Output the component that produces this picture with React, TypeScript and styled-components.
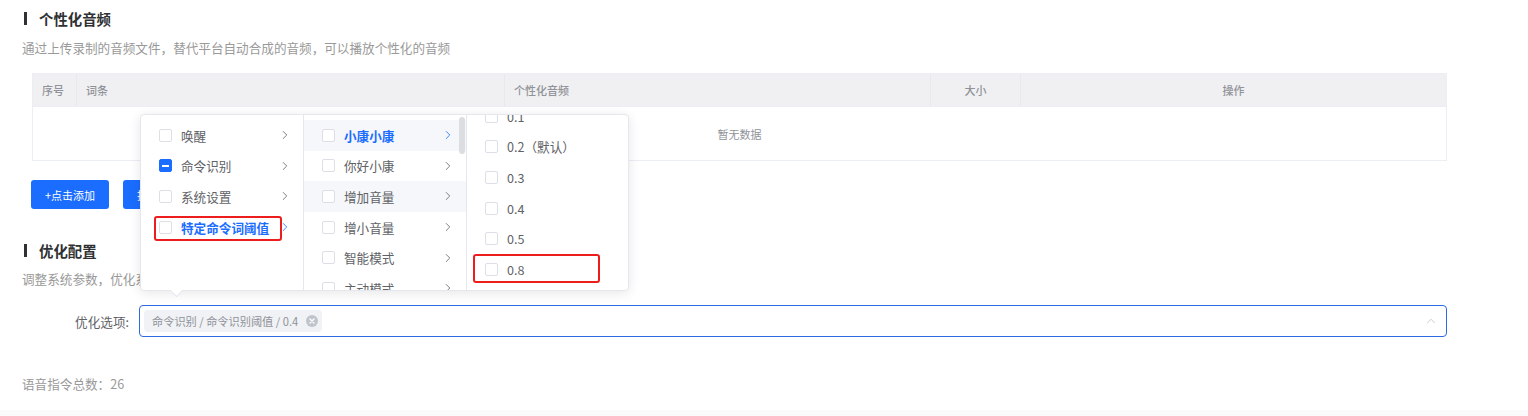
import React, { useLayoutEffect, useRef } from "react";
import styled, { createGlobalStyle } from "styled-components";
import { ChevronRight, ChevronUp } from "lucide-react";

const GlobalStyle = createGlobalStyle`
	* { box-sizing: border-box; }
	body {
		margin: 0;
		background: #fafafa;
		font-family: "Noto Sans CJK SC", "Noto Sans", sans-serif;
		color: #606266;
	}
`;

const PRIMARY = "#1a6dff";

interface CascaderItem {
	label: string;
	checked?: boolean;
	indeterminate?: boolean;
	active?: boolean;
	hover?: boolean;
	leaf?: boolean;
}

const wakeMenu: CascaderItem[] = [
	{ label: "唤醒" },
	{ label: "命令识别", indeterminate: true },
	{ label: "系统设置" },
	{ label: "特定命令词阈值", active: true },
];

const wordMenu: CascaderItem[] = [
	{ label: "小康小康", active: true, hover: true },
	{ label: "你好小康" },
	{ label: "增加音量", hover: true },
	{ label: "增小音量" },
	{ label: "智能模式" },
	{ label: "主动模式" },
	{ label: "关闭屏幕" },
];

const valueMenu: CascaderItem[] = [
	{ label: "0.1", leaf: true },
	{ label: "0.2（默认）", leaf: true },
	{ label: "0.3", leaf: true },
	{ label: "0.4", leaf: true },
	{ label: "0.5", leaf: true },
	{ label: "0.8", leaf: true },
];

const Menu = ({ items, scrollToEnd }: { items: CascaderItem[]; scrollToEnd?: boolean }) => {
	const ref = useRef<HTMLUListElement>(null);
	useLayoutEffect(() => {
		if (scrollToEnd && ref.current) ref.current.scrollTop = ref.current.scrollHeight;
	}, [scrollToEnd]);
	return (
		<MenuList ref={ref}>
			{items.map((item) => (
				<MenuItem key={item.label} $hover={item.hover}>
					<Checkbox $checked={item.indeterminate}>
						{item.indeterminate && <Dash />}
					</Checkbox>
					<ItemLabel $active={item.active}>{item.label}</ItemLabel>
					{!item.leaf && (
						<Arrow $active={item.active}>
							<ChevronRight size={14} strokeWidth={1.4} />
						</Arrow>
					)}
				</MenuItem>
			))}
		</MenuList>
	);
};

const App = () => {
	return (
		<>
			<GlobalStyle />
			<Card>
				<SectionTitle>个性化音频</SectionTitle>
				<Description>通过上传录制的音频文件，替代平台自动合成的音频，可以播放个性化的音频</Description>
				<Table>
					<HeaderRow>
						<HeadCell $width={44}>序号</HeadCell>
						<HeadCell $width={428}>词条</HeadCell>
						<HeadCell $width={426}>个性化音频</HeadCell>
						<HeadCell $width={90} $center>大小</HeadCell>
						<HeadCell $center $grow>操作</HeadCell>
					</HeaderRow>
					<EmptyBody>暂无数据</EmptyBody>
				</Table>
				<ButtonRow>
					<Button>+点击添加</Button>
					<Button>批量上传</Button>
				</ButtonRow>
				<SectionTitle $gap={31}>优化配置</SectionTitle>
				<Description $gap={9}>调整系统参数，优化系统识别效果与交互体验</Description>
				<FormRow>
					<FormLabel>优化选项:</FormLabel>
					<Select>
						<Tag>
							命令识别 / 命令识别阈值 / 0.4
							<TagClose>
								<svg width="8" height="8" viewBox="0 0 8 8">
									<path d="M2 2 L6 6 M6 2 L2 6" stroke="#fff" strokeWidth="1.3" strokeLinecap="round" />
								</svg>
							</TagClose>
						</Tag>
						<SelectArrow>
							<ChevronUp size={14} strokeWidth={1.5} />
						</SelectArrow>
						<Popper>
							<Menu items={wakeMenu} />
							<Menu items={wordMenu} />
							<Menu items={valueMenu} scrollToEnd />
							<ScrollThumb />
							<Highlight $left={13} $top={101} $width={128} $height={25} />
							<Highlight $left={332} $top={139} $width={127} $height={29} />
							<PopperArrow />
						</Popper>
					</Select>
				</FormRow>
				<Total>语音指令总数：26</Total>
			</Card>
		</>
	);
};

const Card = styled.main`
	height: 410px;
	background: #fff;
	padding: 8px 81px 0 22px;
`;

const SectionTitle = styled.h2<{ $gap?: number }>`
	margin: ${(p) => p.$gap ?? 0}px 0 0;
	height: 20px;
	display: flex;
	align-items: center;
	gap: 12px;
	padding-left: 2px;
	font-size: 14.4px;
	font-weight: bold;
	color: #303133;

	&::before {
		content: "";
		width: 3px;
		height: 13px;
		background: #303133;
	}
`;

const Description = styled.p<{ $gap?: number }>`
	margin: ${(p) => p.$gap ?? 10}px 0 0;
	line-height: 20px;
	font-size: 12.6px;
	color: #999;
`;

const Table = styled.div`
	margin: 15px 0 0 10px;
	border: 1px solid #ebeef5;
`;

const HeaderRow = styled.div`
	display: flex;
	height: 33px;
	background: #f0f0f2;
	border-bottom: 1px solid #ebeef5;
`;

const HeadCell = styled.div<{ $width?: number; $center?: boolean; $grow?: boolean }>`
	width: ${(p) => (p.$width ? `${p.$width}px` : "auto")};
	flex: ${(p) => (p.$grow ? 1 : "none")};
	display: flex;
	align-items: center;
	justify-content: ${(p) => (p.$center ? "center" : "flex-start")};
	padding: 0 9px;
	font-size: 11px;
	font-weight: 500;
	color: #909399;
	border-right: 1px solid #e8e9ee;

	&:last-child {
		border-right: none;
	}
`;

const EmptyBody = styled.div`
	height: 53px;
	display: flex;
	align-items: center;
	justify-content: center;
	font-size: 11px;
	color: #909399;
`;

const ButtonRow = styled.div`
	margin: 19px 0 0 9px;
	display: flex;
	gap: 14px;
`;

const Button = styled.button`
	height: 29px;
	padding: 0 14px;
	border: none;
	border-radius: 3px;
	background: ${PRIMARY};
	color: #fff;
	font-family: inherit;
	font-size: 11px;
`;

const FormRow = styled.div`
	margin-top: 16px;
	display: flex;
	align-items: center;
`;

const FormLabel = styled.label`
	width: 117px;
	padding-right: 10px;
	text-align: right;
	font-size: 12.6px;
	color: #606266;
`;

const Select = styled.div`
	position: relative;
	flex: 1;
	height: 32px;
	display: flex;
	align-items: center;
	padding: 0 4px;
	border: 1px solid #2b6ae0;
	border-radius: 4px;
`;

const Tag = styled.span`
	height: 22px;
	display: flex;
	align-items: center;
	gap: 8px;
	padding: 0 4px 0 8px;
	border-radius: 4px;
	background: #f0f2f5;
	font-size: 11.2px;
	color: #909399;
`;

const TagClose = styled.span`
	width: 12px;
	height: 12px;
	border-radius: 50%;
	background: #c0c4cc;
	display: flex;
	align-items: center;
	justify-content: center;
`;

const SelectArrow = styled.span`
	margin-left: auto;
	margin-right: 4px;
	display: flex;
	color: #c0c4cc;
`;

const Popper = styled.div`
	position: absolute;
	left: 0;
	bottom: calc(100% + 15px);
	height: 177px;
	display: flex;
	background: #fff;
	border: 1px solid #e4e7ed;
	border-radius: 4px;
	box-shadow: 0 2px 12px rgba(0, 0, 0, 0.1);
`;

const MenuList = styled.ul`
	width: 163px;
	height: 100%;
	margin: 0;
	padding: 5px 0;
	list-style: none;
	overflow: hidden;
	border-right: 1px solid #e4e7ed;

	&:last-of-type {
		width: 161px;
		border-right: none;
	}
`;

const MenuItem = styled.li<{ $hover?: boolean }>`
	height: 30.6px;
	display: flex;
	align-items: center;
	gap: 9px;
	padding: 0 11px 0 18px;
	background: ${(p) => (p.$hover ? "#f5f7fa" : "transparent")};
	font-size: 12.6px;
`;

const Checkbox = styled.span<{ $checked?: boolean }>`
	width: 13px;
	height: 13px;
	flex: none;
	display: flex;
	align-items: center;
	justify-content: center;
	border: 1px solid ${(p) => (p.$checked ? PRIMARY : "#dcdfe6")};
	border-radius: 2px;
	background: ${(p) => (p.$checked ? PRIMARY : "#fff")};
`;

const Dash = styled.span`
	width: 7px;
	height: 2px;
	background: #fff;
`;

const ItemLabel = styled.span<{ $active?: boolean }>`
	flex: 1;
	white-space: nowrap;
	color: ${(p) => (p.$active ? PRIMARY : "#606266")};
	font-weight: ${(p) => (p.$active ? "bold" : "normal")};
`;

const Arrow = styled.span<{ $active?: boolean }>`
	display: flex;
	color: ${(p) => (p.$active ? PRIMARY : "#606266")};
`;

const ScrollThumb = styled.span`
	position: absolute;
	left: 318px;
	top: 2px;
	width: 6px;
	height: 37px;
	border-radius: 3px;
	background: #dcdde0;
`;

const Highlight = styled.span<{ $left: number; $top: number; $width: number; $height: number }>`
	position: absolute;
	left: ${(p) => p.$left}px;
	top: ${(p) => p.$top}px;
	width: ${(p) => p.$width}px;
	height: ${(p) => p.$height}px;
	border: 2px solid #ee1d1d;
	border-radius: 3px;
	pointer-events: none;
`;

const PopperArrow = styled.span`
	position: absolute;
	left: 29px;
	bottom: -7px;
	width: 12px;
	height: 7px;
	overflow: hidden;

	&::before {
		content: "";
		position: absolute;
		left: 1px;
		top: -6px;
		width: 9px;
		height: 9px;
		background: #fff;
		border: 1px solid #e4e7ed;
		transform: rotate(45deg);
	}
`;

const Total = styled.p`
	margin: 37px 0 0;
	line-height: 20px;
	font-size: 12.6px;
	color: #999;
`;

export default App;
